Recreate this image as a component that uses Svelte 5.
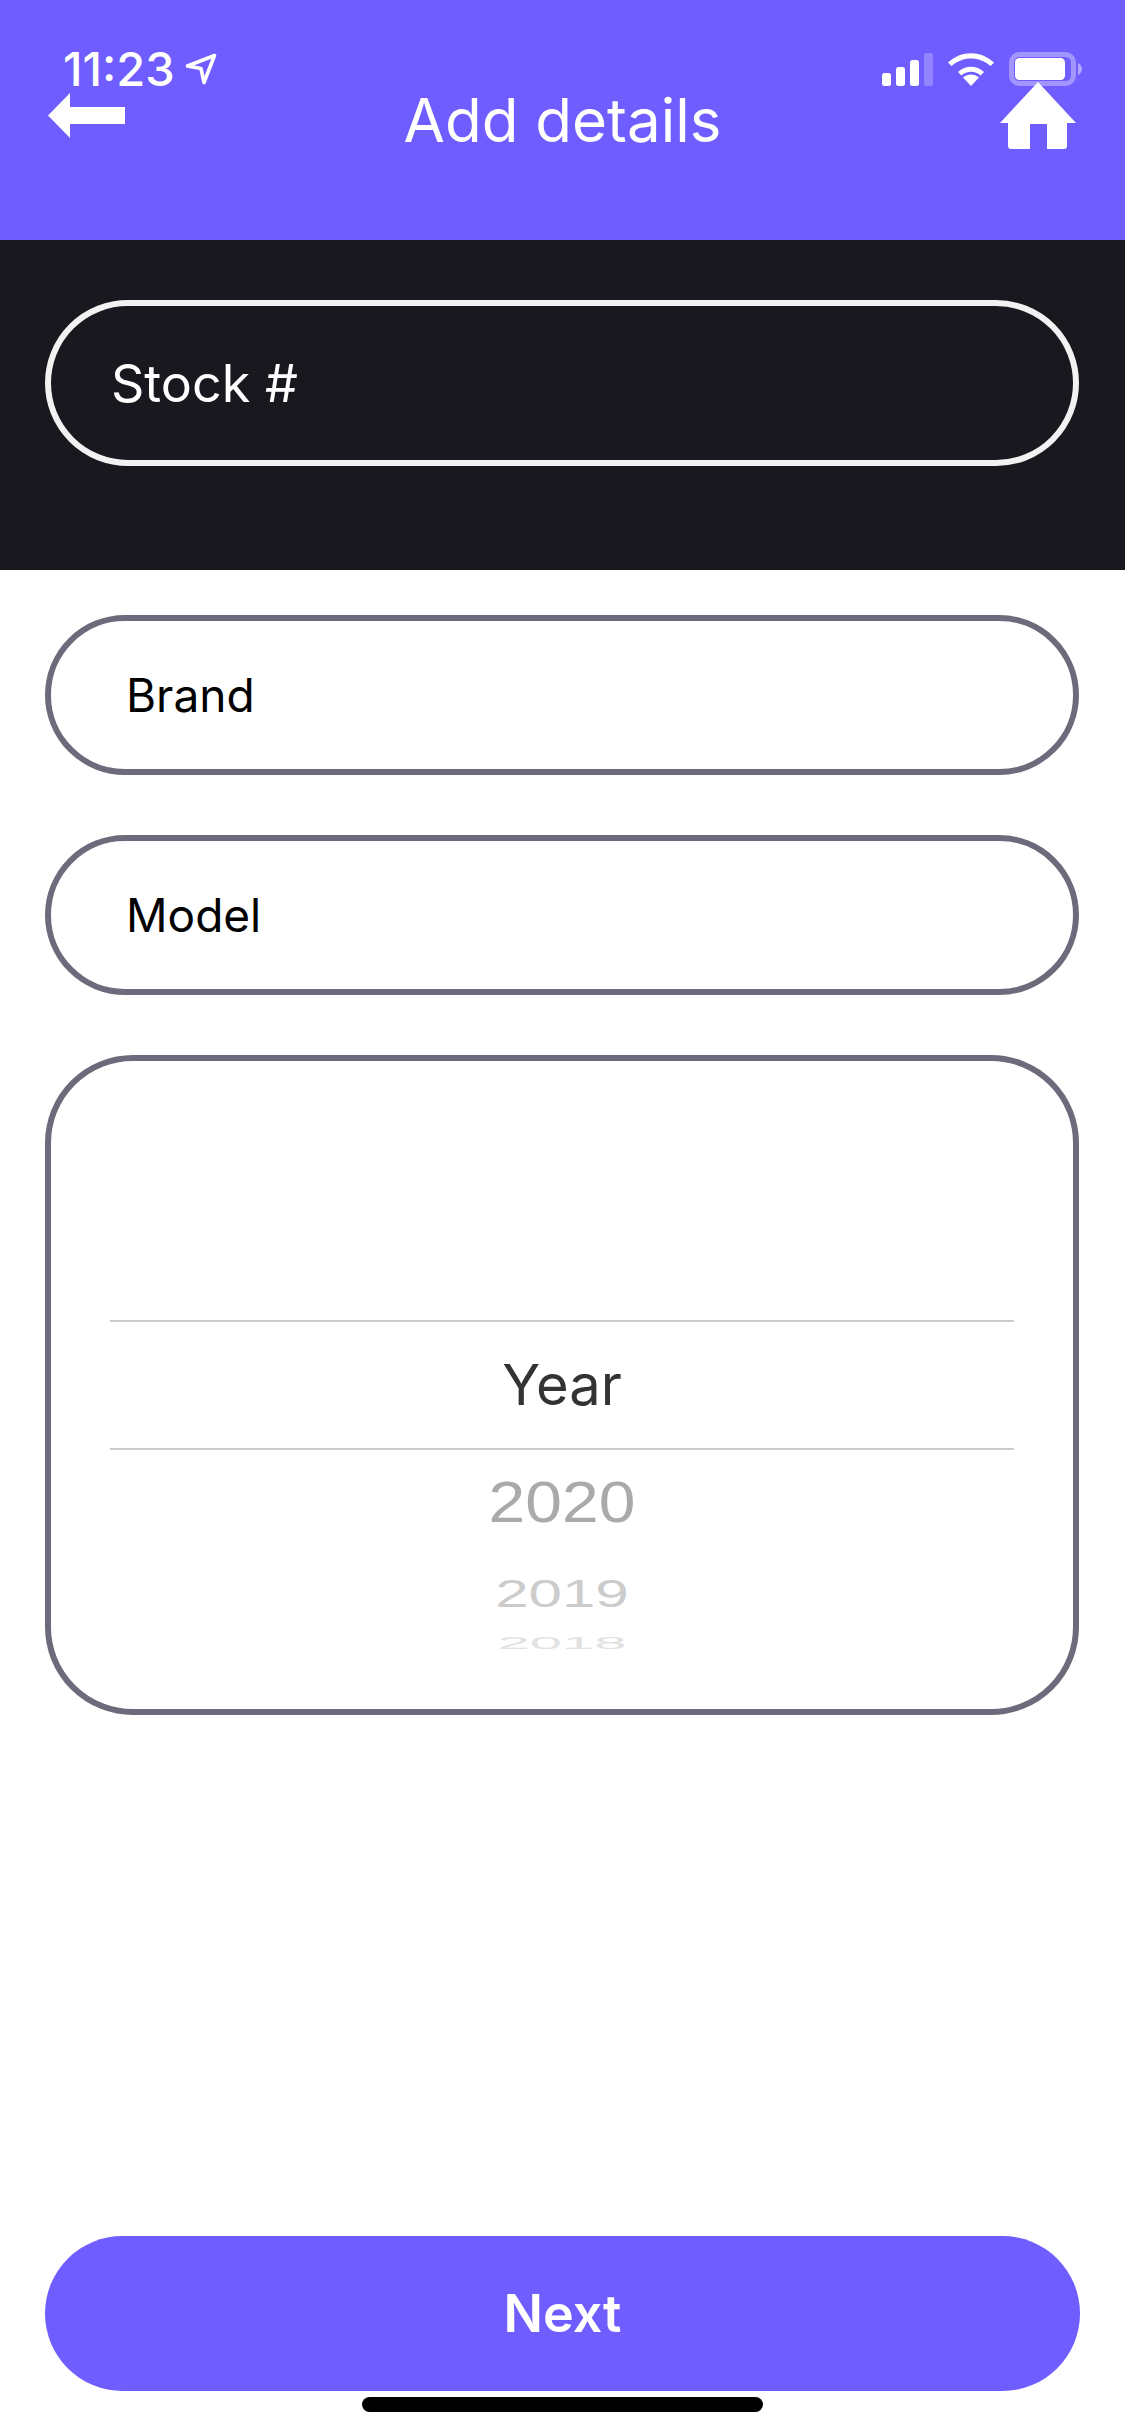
<script>
  const wheel = [
    { label: '2020', cls: 'near' },
    { label: '2019', cls: 'far' },
    { label: '2018', cls: 'farthest' }
  ];
</script>

<div class="screen">
  <div class="status">
    <div class="clock">
      <span>11:23</span>
      <svg class="loc" width="32" height="32" viewBox="0 0 32 32">
        <path d="M2.5 13 L29.5 2.5 L19 29.5 L16 15.5 Z" fill="none" stroke="#fff" stroke-width="3.6" stroke-linejoin="round" />
      </svg>
    </div>
    <div class="indicators">
      <svg width="51" height="33" viewBox="0 0 51 33">
        <rect x="0" y="20" width="9" height="13" rx="2.5" fill="#fff" />
        <rect x="14" y="14" width="9" height="19" rx="2.5" fill="#fff" />
        <rect x="28" y="7" width="9" height="26" rx="2.5" fill="#fff" />
        <rect x="42" y="0" width="9" height="33" rx="2.5" fill="#fff" opacity="0.25" />
      </svg>
      <svg width="46" height="33" viewBox="0 0 46 33">
        <path d="M23 33 L15 24.5 C19.5 20.5 26.5 20.5 31 24.5 Z" fill="#fff" />
        <path d="M10 19 L13.5 22.5 C18.8 17.6 27.2 17.6 32.5 22.5 L36 19 C28.6 12 17.4 12 10 19 Z" fill="#fff" />
        <path d="M0 9.5 L3.5 13 C14.6 3 31.4 3 42.5 13 L46 9.5 C32.8 -3 13.2 -3 0 9.5 Z" fill="#fff" />
      </svg>
      <svg class="battery" width="73" height="34" viewBox="0 0 73 34">
        <rect x="2.5" y="2.5" width="62" height="29" rx="8" fill="none" stroke="#fff" stroke-opacity="0.35" stroke-width="5" />
        <rect x="6" y="6" width="50" height="22" rx="4.5" fill="#fff" />
        <path d="M69 11 C71.5 12 73 14.5 73 17 C73 19.5 71.5 22 69 23 Z" fill="#fff" fill-opacity="0.45" />
      </svg>
    </div>
  </div>

  <header class="topbar">
    <svg class="arrow" width="77" height="45" viewBox="0 0 77 45">
      <path d="M0 22.5 L22 0 L22 14 L77 14 L77 31 L22 31 L22 45 Z" fill="#fff" />
    </svg>
    <h1>Add details</h1>
    <svg class="home" width="76" height="67" viewBox="0 0 76 67">
      <path d="M38 0 L76 41 L67 41 L67 64 Q67 67 64 67 L47 67 L47 42 L30 42 L30 67 L11 67 Q8 67 8 64 L8 41 L0 41 Z" fill="#fff" />
    </svg>
  </header>

  <section class="stock">
    <input class="field dark" placeholder="Stock #" />
  </section>

  <form class="details" on:submit|preventDefault>
    <input class="field light" placeholder="Brand" />
    <input class="field light" placeholder="Model" />

    <div class="picker">
      <div class="row selected">Year</div>
      {#each wheel as item}
        <div class="row {item.cls}"><span>{item.label}</span></div>
      {/each}
    </div>

    <button type="submit">Next</button>
  </form>

  <div class="home-bar"></div>
</div>

<style>
  :global(body) {
    margin: 0;
    background: #fff;
  }

  .screen {
    position: relative;
    width: 1125px;
    height: 2436px;
    display: flex;
    flex-direction: column;
    overflow: hidden;
    font-family: Inter, "Liberation Sans", sans-serif;
  }

  .status {
    position: absolute;
    top: 52px;
    left: 63px;
    right: 43px;
    display: flex;
    justify-content: space-between;
    align-items: flex-start;
    color: #fff;
  }

  .clock {
    display: flex;
    align-items: center;
    gap: 10px;
    font-size: 47px;
    font-weight: 500;
    line-height: 34px;
  }

  .indicators {
    display: flex;
    align-items: flex-start;
    gap: 15px;
    padding-top: 1px;
  }

  .battery {
    margin-top: -1px;
  }

  .topbar {
    height: 240px;
    box-sizing: border-box;
    padding: 82px 53px 0 48px;
    background: #705dff;
    display: flex;
    justify-content: space-between;
    align-items: flex-start;
  }

  .home {
    margin-right: -4px;
  }

  .arrow {
    margin-top: 11px;
  }

  h1 {
    margin: 0;
    color: #fff;
    font-size: 60px;
    font-weight: 400;
    line-height: 76px;
  }

  .stock {
    height: 330px;
    box-sizing: border-box;
    padding: 60px 46px 0 45px;
    background: #19181f;
  }

  .field {
    display: block;
    width: 100%;
    box-sizing: border-box;
    border-radius: 84px;
    border-style: solid;
    border-width: 6px;
    font-family: inherit;
    outline: none;
  }

  .dark {
    height: 166px;
    padding: 0 0 0 60px;
    border-color: #f2f2f2;
    background: transparent;
    color: #fff;
    font-size: 52px;
  }

  .dark::placeholder {
    color: #fff;
    opacity: 1;
  }

  .light {
    height: 160px;
    padding: 0 0 0 75px;
    border-color: #6c6b7b;
    background: #fff;
    font-size: 46px;
  }

  .light::placeholder {
    color: #000;
    opacity: 1;
  }

  .details {
    flex: 1;
    display: flex;
    flex-direction: column;
    gap: 60px;
    padding: 45px 46px 45px 45px;
  }

  .picker {
    height: 660px;
    box-sizing: border-box;
    padding: 259px 59px 0;
    border: 6px solid #6c6b7b;
    border-radius: 88px;
    display: flex;
    flex-direction: column;
  }

  .row {
    display: flex;
    align-items: center;
    justify-content: center;
  }

  .selected {
    height: 130px;
    box-sizing: border-box;
    border-top: 2px solid #cbcbcb;
    border-bottom: 2px solid #cbcbcb;
    color: #333;
    font-size: 56px;
  }

  .near,
  .far,
  .farthest {
    font-family: "Liberation Sans", sans-serif;
  }

  .near {
    height: 103px;
    color: #aaa;
    font-size: 66px;
  }

  .far {
    height: 81px;
    color: #ccc;
    font-size: 60px;
  }

  .farthest {
    height: 18px;
    color: #e2e2e2;
    font-size: 58px;
  }

  .row span {
    display: block;
  }

  .near span {
    transform: scaleY(0.88);
  }

  .far span {
    transform: scaleY(0.64);
  }

  .farthest span {
    transform: scaleY(0.27);
  }

  button {
    margin-top: auto;
    height: 155px;
    flex-shrink: 0;
    margin-right: -1px;
    border: none;
    border-radius: 78px;
    background: #705dff;
    color: #fff;
    font-family: inherit;
    font-size: 52px;
    font-weight: 600;
  }

  .home-bar {
    position: absolute;
    left: 362px;
    bottom: 24px;
    width: 401px;
    height: 15px;
    border-radius: 8px;
    background: #000;
  }
</style>
